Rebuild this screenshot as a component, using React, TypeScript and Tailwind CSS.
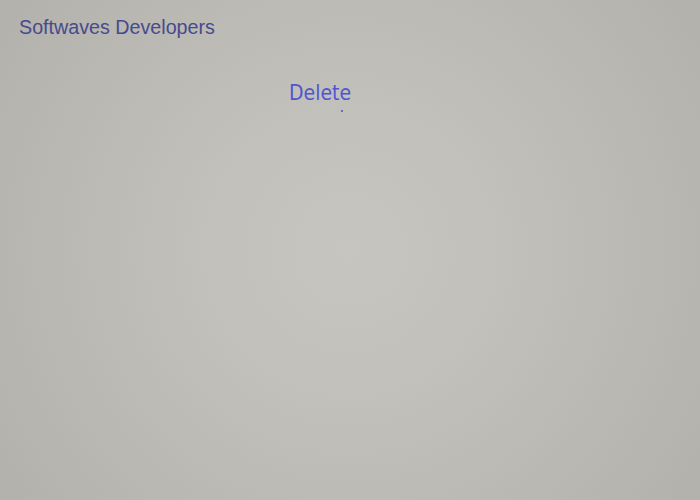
import React from "react";

export default function App() {
  return (
    <div className="w-[700px] h-[500px] overflow-hidden bg-[radial-gradient(circle_at_50%_50%,#c6c5c0_0%,#c1c0bb_35%,#b2b1ab_100%)]">
      <div className="pt-[15px] pl-[19px]">
        <h1 className="text-[19.7px] leading-[24px] text-[#484a8e] font-['Liberation_Sans',Arial,sans-serif] font-normal">
          Softwaves Developers
        </h1>
      </div>
      <div className="mt-[40px] pl-[289px] flex flex-col items-start">
        <span className="text-[21px] leading-[28px] text-[#5055d0] font-stretch-condensed font-['DejaVu_Sans_Condensed','DejaVu_Sans',sans-serif]">
          Delete
        </span>
        <span className="ml-[52px] mt-[3px] w-[2px] h-[2px] bg-[#5055d0] opacity-80"></span>
      </div>
    </div>
  );
}
